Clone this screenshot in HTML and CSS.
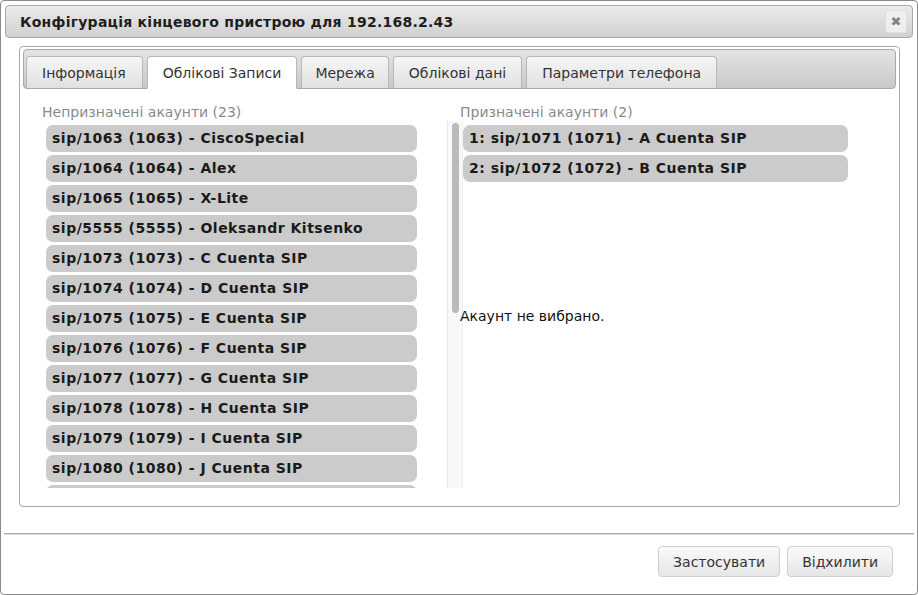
FILE: index.html
```html
<!DOCTYPE html>
<html lang="uk">
<head>
<meta charset="utf-8">
<title>Конфігурація кінцевого пристрою</title>
<link rel="stylesheet" href="styles.css">
</head>
<body>
<div class="dialog">
  <div class="titlebar">
    <span class="title">Конфігурація кінцевого пристрою для 192.168.2.43</span>
    <button class="close" type="button" aria-label="Закрити">✖</button>
  </div>
  <div class="tabs">
    <div class="tabbar">
      <div class="tab tab-first">Інформація</div>
      <div class="tab active">Облікові Записи</div>
      <div class="tab tab-narrow">Мережа</div>
      <div class="tab">Облікові дані</div>
      <div class="tab">Параметри телефона</div>
    </div>
    <div class="panel">
      <div class="col left">
        <div class="heading">Непризначені акаунти (23)</div>
        <div class="scrollbox">
          <div class="list">
            <div class="item">sip/1063 (1063) - CiscoSpecial</div>
            <div class="item">sip/1064 (1064) - Alex</div>
            <div class="item">sip/1065 (1065) - X-Lite</div>
            <div class="item">sip/5555 (5555) - Oleksandr Kitsenko</div>
            <div class="item">sip/1073 (1073) - C Cuenta SIP</div>
            <div class="item">sip/1074 (1074) - D Cuenta SIP</div>
            <div class="item">sip/1075 (1075) - E Cuenta SIP</div>
            <div class="item">sip/1076 (1076) - F Cuenta SIP</div>
            <div class="item">sip/1077 (1077) - G Cuenta SIP</div>
            <div class="item">sip/1078 (1078) - H Cuenta SIP</div>
            <div class="item">sip/1079 (1079) - I Cuenta SIP</div>
            <div class="item">sip/1080 (1080) - J Cuenta SIP</div>
            <div class="item"></div>
          </div>
          <div class="track"><div class="thumb"></div></div>
        </div>
      </div>
      <div class="col right">
        <div class="heading">Призначені акаунти (2)</div>
        <div class="assigned">
          <div class="item">1: sip/1071 (1071) - A Cuenta SIP</div>
          <div class="item">2: sip/1072 (1072) - B Cuenta SIP</div>
        </div>
        <div class="message">Акаунт не вибрано.</div>
      </div>
    </div>
  </div>
  <div class="footer">
    <button class="btn" type="button">Застосувати</button>
    <button class="btn" type="button">Відхилити</button>
  </div>
</div>
</body>
</html>
```
FILE: styles.css
```css
* { box-sizing: border-box; }
html, body { margin: 0; padding: 0; background: #fff; }
body { font-family: "DejaVu Sans", Verdana, sans-serif; font-size: 14px; color: #222; }

.dialog {
  width: 918px;
  height: 595px;
  border: 1px solid #8a8a8a;
  border-radius: 4px;
  background: #fff;
  display: flex;
  flex-direction: column;
}

.titlebar {
  margin: 4px 4px 0;
  height: 33px;
  border: 1px solid #a8a8a8;
  border-radius: 4px;
  background: linear-gradient(#ebebeb, #d0d0d0);
  display: flex;
  align-items: center;
  justify-content: space-between;
  padding: 0 5px 0 14px;
}
.title { font-weight: bold; font-size: 14px; letter-spacing: 0.25px; color: #1e1e1e; }
.close {
  width: 22px;
  height: 23px;
  border: 1px solid #dedede;
  border-radius: 3px;
  background: #efefef;
  color: #858585;
  font-family: "DejaVu Sans", sans-serif;
  font-size: 13px;
  line-height: 21px;
  padding: 0;
  text-align: center;
}

.tabs {
  margin: 8px 0 0 18px;
  width: 881px;
  height: 461px;
  border: 1px solid #a8a8a8;
  border-radius: 4px;
  padding: 2px 3px;
  display: flex;
  flex-direction: column;
}
.tabbar {
  height: 40px;
  border: 1px solid #a8a8a8;
  border-radius: 4px;
  background: linear-gradient(#e4e4e4, #c8c8c8);
  display: flex;
  align-items: flex-end;
  gap: 4px;
  padding: 0 2px;
}
.tab {
  height: 33px;
  margin-bottom: -1px;
  border: 1px solid #b8b8b8;
  border-bottom: 1px solid #a8a8a8;
  border-radius: 4px 4px 0 0;
  background: linear-gradient(#f6f6f6, #e0e0e0);
  padding: 0 15px;
  line-height: 32px;
  color: #333;
  font-size: 14px;
}
.tab-first { padding: 0 16px 0 15px; }
.tab-narrow { padding: 0 13px; }
.tab.active {
  background: #fff;
  border-bottom-color: #fff;
}

.panel {
  flex: 1;
  display: grid;
  grid-template-columns: 418px 1fr;
  padding: 15px 0 0 19px;
}
.heading {
  color: #8a8a8a;
  font-size: 14px;
  line-height: 17px;
}
.scrollbox {
  width: 421px;
  height: 367px;
  display: flex;
}
.list {
  width: 405px;
  overflow: hidden;
  padding: 4px 0 0 4px;
  display: flex;
  flex-direction: column;
  gap: 3px;
}
.track {
  width: 16px;
  background: #f8f8f8;
  border-left: 1px solid #e6e6e6;
  border-right: 1px solid #efefef;
  padding: 2px 3px 0 4px;
}
.thumb {
  height: 190px;
  border-radius: 4px;
  background: #bababa;
}
.item {
  flex: none;
  width: 371px;
  height: 27px;
  border-radius: 7px;
  background: #cbcbcb;
  font-weight: bold;
  font-size: 14px;
  letter-spacing: 0.5px;
  line-height: 27px;
  padding-left: 6px;
  color: #1a1a1a;
  white-space: nowrap;
}
.assigned {
  padding: 4px 0 0 3px;
  display: flex;
  flex-direction: column;
  gap: 3px;
}
.assigned .item { width: 385px; }
.message {
  margin-top: 126px;
  color: #111;
  line-height: 17px;
}

.footer {
  margin: 26px 3px 0;
  border-top: 1px solid #a8a8a8;
  box-shadow: inset 0 1px #dcdcdc;
  padding: 12px 21px 0 0;
  display: flex;
  justify-content: flex-end;
  gap: 7px;
}
.btn {
  height: 31px;
  border: 1px solid #cfcfcf;
  border-radius: 4px;
  background: linear-gradient(#fafafa, #e6e6e6);
  font-family: "DejaVu Sans", Verdana, sans-serif;
  font-size: 14px;
  color: #333;
  padding: 0 14px;
}
```
